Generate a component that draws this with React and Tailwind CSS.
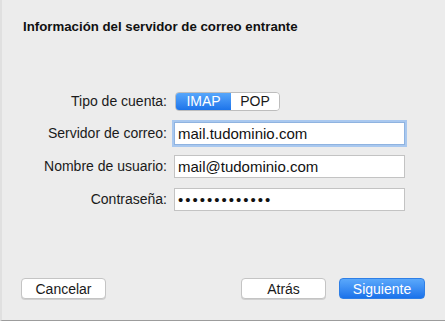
import React from "react";

const font = { fontFamily: '"Helvetica Neue", "Liberation Sans", Arial, sans-serif' };

const Row = ({ label, children, className = "" }) => (
  <div className={"flex items-center " + className}>
    <div className="w-[172px] text-right text-[14px] text-[#1a1a1a] pr-[7px] leading-none">{label}</div>
    {children}
  </div>
);

const Field = ({ value, focused }) => (
  <div
    className={
      "w-[231px] h-[23px] bg-white border flex items-center px-[3px] text-[15px] text-[#111] leading-none " +
      (focused
        ? "border-[#8fb3e0] shadow-[0_0_0_2px_#a9c8ef]"
        : "border-[#c3c3c3]")
    }
  >
    {value}
  </div>
);

export default function App() {
  return (
    <div
      className="w-[445px] h-[321px] bg-[#ececec] border-l-2 border-l-[#e0e0e0] border-b border-b-[#9c9c9c] flex flex-col"
      style={font}
    >
      <div className="pl-[21px] pt-[17px] text-[13.25px] font-bold text-[#111]">
        Información del servidor de correo entrante
      </div>

      <div className="mt-[55px] flex flex-col">
        <Row label="Tipo de cuenta:">
          <div className="flex h-[19px] rounded-[4px] border border-[#bdbdbd] overflow-hidden text-[14px] leading-none ml-[1px]">
            <div className="w-[55px] flex items-center justify-center text-white bg-gradient-to-b from-[#56a6fb] to-[#1c74ea]">
              IMAP
            </div>
            <div className="w-[48px] flex items-center justify-center bg-white text-[#1a1a1a]">
              POP
            </div>
          </div>
        </Row>
        <Row label="Servidor de correo:" className="mt-[11px]">
          <Field value="mail.tudominio.com" focused />
        </Row>
        <Row label="Nombre de usuario:" className="mt-[10px]">
          <Field value="mail@tudominio.com" />
        </Row>
        <Row label="Contraseña:" className="mt-[10px]">
          <Field value={<span className="tracking-[2px] text-[15px]">•••••••••••••</span>} />
        </Row>
      </div>

      <div className="mt-auto mb-[21px] flex items-center pl-[19px] pr-[20px] text-[14px] leading-none">
        <button className="w-[85px] h-[21px] bg-white border border-[#c4c4c4] rounded-[4px] text-[#1a1a1a] shadow-[0_1px_0_#d0d0d0]">
          Cancelar
        </button>
        <div className="flex-1" />
        <button className="w-[85px] h-[21px] bg-white border border-[#c4c4c4] rounded-[4px] text-[#1a1a1a] shadow-[0_1px_0_#d0d0d0]">
          Atrás
        </button>
        <button className="ml-[13px] w-[86px] h-[21px] rounded-[4px] text-white bg-gradient-to-b from-[#5aa8fb] to-[#1a72ea] border border-[#2f7fe6]">
          Siguiente
        </button>
      </div>
    </div>
  );
}
